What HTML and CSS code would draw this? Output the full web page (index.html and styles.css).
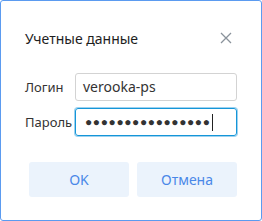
FILE: index.html
```html
<!DOCTYPE html>
<html>
<head>
<meta charset="utf-8">
<link rel="stylesheet" href="styles.css">
</head>
<body>
<div class="dialog">
  <div class="header">
    <div class="title">Учетные данные</div>
    <svg class="close" width="12" height="12" viewBox="0 0 12 12"><path d="M1 1L11 11M11 1L1 11" stroke="#8a929b" stroke-width="1.3" fill="none"/></svg>
  </div>
  <div class="form">
    <div class="row">
      <label class="label">Логин</label>
      <div class="input">verooka-ps</div>
    </div>
    <div class="row">
      <label class="label">Пароль</label>
      <div class="input focused"><span class="dots">●●●●●●●●●●●●●●●●</span><span class="caret"></span></div>
    </div>
  </div>
  <div class="buttons">
    <div class="btn">OK</div>
    <div class="btn">Отмена</div>
  </div>
</div>
</body>
</html>
```
FILE: styles.css
```css
html, body {
  margin: 0;
  padding: 0;
  background: #ffffff;
}
.dialog {
  box-sizing: border-box;
  width: 262px;
  height: 221px;
  border: 1px solid #5b9bf0;
  border-radius: 3px;
  font-family: "Noto Sans", "Open Sans", sans-serif;
  color: #222;
  padding: 0 24px 0 24px;
}
.header {
  display: flex;
  align-items: center;
  justify-content: space-between;
  height: 26px;
  margin-top: 24px;
  padding-right: 5px;
}
.title {
  font-size: 14px;
  color: #1e1e1e;
}
.close {
  display: block;
}
.form {
  margin-top: 22px;
  display: flex;
  flex-direction: column;
  gap: 7px;
}
.row {
  display: flex;
  align-items: center;
}
.label {
  width: 50px;
  font-size: 13px;
  color: #333;
}
.input {
  box-sizing: border-box;
  width: 162px;
  height: 28px;
  border: 1px solid #d3d3d3;
  border-radius: 3px;
  padding-left: 7px;
  font-size: 14px;
  line-height: 26px;
  color: #333;
  display: flex;
  align-items: center;
}
.input.focused {
  border: 1px solid #1596d8;
  box-shadow: 0 0 0 1px #9ed2f0;
}
.dots {
  font-size: 12px;
  letter-spacing: 0.6px;
  color: #333;
  margin-left: 2px;
}
.caret {
  width: 1px;
  height: 17px;
  background: #222;
  margin-left: 1px;
}
.buttons {
  margin-top: 26px;
  display: flex;
  gap: 8px;
  padding-left: 4px;
}
.btn {
  width: 100px;
  height: 35px;
  background: #ebf3fc;
  border-radius: 3px;
  color: #4a88e8;
  font-size: 14px;
  display: flex;
  align-items: center;
  justify-content: center;
}
```
